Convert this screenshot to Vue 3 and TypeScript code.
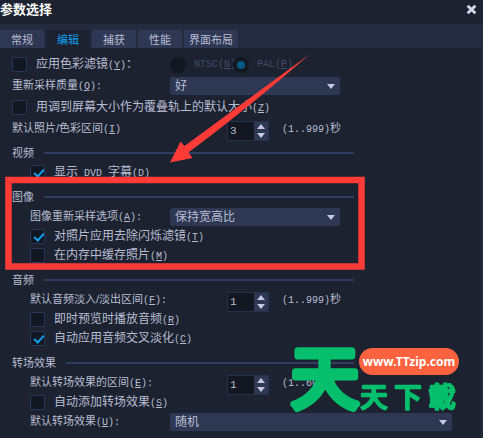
<script setup lang="ts">
import { reactive, ref } from 'vue'

const tabs = ['常规', '编辑', '捕获', '性能', '界面布局']
const activeTab = ref('编辑')

const form = reactive({
  colorFilter: false,
  standard: 'PAL',
  quality: '好',
  fitScreen: false,
  photoLength: 3,
  dvdSubtitle: true,
  resample: '保持宽高比',
  antiFlicker: true,
  cachePhotos: false,
  fadeLength: 1,
  previewAudio: false,
  crossFade: true,
  transitionLength: 1,
  autoTransition: false,
  transition: '随机',
})

type NumberField = 'photoLength' | 'fadeLength' | 'transitionLength'

function step(field: NumberField, delta: number, max: number) {
  form[field] = Math.min(max, Math.max(1, Number(form[field]) + delta))
}
</script>

<template>
  <main class="dialog">
    <header class="titlebar">
      <h1>参数选择</h1>
      <button class="close" type="button" aria-label="关闭">
        <svg viewBox="0 0 10 10"><path d="M1.5 1.5 8.5 8.5M8.5 1.5 1.5 8.5" /></svg>
      </button>
    </header>

    <nav class="tabs">
      <button
        v-for="tab in tabs"
        :key="tab"
        type="button"
        :class="{ active: tab === activeTab }"
        @click="activeTab = tab"
      >{{ tab }}</button>
    </nav>

    <form class="panel" @submit.prevent>
      <section class="group general">
        <div class="row">
          <label class="check lead"><input v-model="form.colorFilter" type="checkbox" /><span>应用色彩滤镜<i>(<u>Y</u>)</i>：</span></label>
          <label class="radio"><input v-model="form.standard" type="radio" value="NTSC" disabled /><i>NTSC(<u>N</u>)</i></label>
          <label class="radio"><input v-model="form.standard" type="radio" value="PAL" disabled /><i>PAL(<u>P</u>)</i></label>
        </div>
        <div class="row field">
          <label class="lead" for="quality">重新采样质量<i>(<u>Q</u>):</i></label>
          <span class="combo">
            <select id="quality" v-model="form.quality"><option>好</option></select>
            <svg viewBox="0 0 8 5"><path d="M0 0H8L4 5Z" /></svg>
          </span>
        </div>
        <div class="row">
          <label class="check"><input v-model="form.fitScreen" type="checkbox" /><span>用调到屏幕大小作为覆叠轨上的默认大小<i>(<u>Z</u>)</i></span></label>
        </div>
        <div class="row field">
          <label class="lead" for="photo">默认照片/色彩区间<i>(<u>I</u>)</i></label>
          <span class="spinner">
            <input id="photo" v-model="form.photoLength" type="text" />
            <button type="button" aria-label="增加" @click="step('photoLength', 1, 999)"><svg viewBox="0 0 8 5"><path d="M0 5H8L4 0Z" /></svg></button>
            <button type="button" aria-label="减少" @click="step('photoLength', -1, 999)"><svg viewBox="0 0 8 5"><path d="M0 0H8L4 5Z" /></svg></button>
          </span>
          <span class="range"><i>(1..999)</i>秒</span>
        </div>
      </section>

      <section class="group">
        <h2>视频</h2>
        <div class="row">
          <label class="check"><input v-model="form.dvdSubtitle" type="checkbox" /><span>显示<i> DVD </i>字幕<i>(<u>D</u>)</i></span></label>
        </div>
      </section>

      <section class="group">
        <h2>图像</h2>
        <div class="row field">
          <label class="lead" for="resample">图像重新采样选项<i>(<u>A</u>):</i></label>
          <span class="combo">
            <select id="resample" v-model="form.resample"><option>保持宽高比</option></select>
            <svg viewBox="0 0 8 5"><path d="M0 0H8L4 5Z" /></svg>
          </span>
        </div>
        <div class="row">
          <label class="check"><input v-model="form.antiFlicker" type="checkbox" /><span>对照片应用去除闪烁滤镜<i>(<u>T</u>)</i></span></label>
        </div>
        <div class="row">
          <label class="check"><input v-model="form.cachePhotos" type="checkbox" /><span>在内存中缓存照片<i>(<u>M</u>)</i></span></label>
        </div>
      </section>

      <section class="group">
        <h2>音频</h2>
        <div class="row field">
          <label class="lead" for="fade">默认音频淡入/淡出区间<i>(<u>F</u>):</i></label>
          <span class="spinner">
            <input id="fade" v-model="form.fadeLength" type="text" />
            <button type="button" aria-label="增加" @click="step('fadeLength', 1, 999)"><svg viewBox="0 0 8 5"><path d="M0 5H8L4 0Z" /></svg></button>
            <button type="button" aria-label="减少" @click="step('fadeLength', -1, 999)"><svg viewBox="0 0 8 5"><path d="M0 0H8L4 5Z" /></svg></button>
          </span>
          <span class="range"><i>(1..999)</i>秒</span>
        </div>
        <div class="row">
          <label class="check"><input v-model="form.previewAudio" type="checkbox" /><span>即时预览时播放音频<i>(<u>R</u>)</i></span></label>
        </div>
        <div class="row">
          <label class="check"><input v-model="form.crossFade" type="checkbox" /><span>自动应用音频交叉淡化<i>(<u>C</u>)</i></span></label>
        </div>
      </section>

      <section class="group">
        <h2>转场效果</h2>
        <div class="row field">
          <label class="lead" for="length">默认转场效果的区间<i>(<u>E</u>):</i></label>
          <span class="spinner">
            <input id="length" v-model="form.transitionLength" type="text" />
            <button type="button" aria-label="增加" @click="step('transitionLength', 1, 60)"><svg viewBox="0 0 8 5"><path d="M0 5H8L4 0Z" /></svg></button>
            <button type="button" aria-label="减少" @click="step('transitionLength', -1, 60)"><svg viewBox="0 0 8 5"><path d="M0 0H8L4 5Z" /></svg></button>
          </span>
          <span class="range"><i>(1..60)</i>秒</span>
        </div>
        <div class="row">
          <label class="check"><input v-model="form.autoTransition" type="checkbox" /><span>自动添加转场效果<i>(<u>S</u>)</i></span></label>
        </div>
        <div class="row field">
          <label class="lead" for="transition">默认转场效果<i>(<u>U</u>):</i></label>
          <span class="combo wide">
            <select id="transition" v-model="form.transition"><option>随机</option></select>
            <svg viewBox="0 0 8 5"><path d="M0 0H8L4 5Z" /></svg>
          </span>
        </div>
      </section>
    </form>

    <!-- Annotation: highlighted section and pointer -->
    <svg class="overlay" width="483" height="438" viewBox="0 0 483 438">
      <rect x="8.5" y="180" width="353" height="86.5" fill="none" stroke="#ff3b38" stroke-width="6.5" />
      <path d="M170 162.500 180.500 141.500 184.500 146 Q247 100 310 54 Q252 105 188.500 152.500L192.500 158Z" fill="#ff3b38" />
    </svg>

    <!-- Site badge -->
    <svg class="overlay" width="483" height="438" viewBox="0 0 483 438">
      <g class="brand">
        <text class="big" x="325" y="403">天</text>
        <text x="374" y="407">天</text>
        <text x="408" y="407">下</text>
        <text x="442" y="407">載</text>
      </g>
      <rect x="359" y="348" width="100" height="27" rx="13.500" fill="#ff623e" />
      <text class="url" x="409" y="366">www.TTzip.com</text>
    </svg>
  </main>
</template>

<style>
body {
  margin: 0;
  background: #1c2230;
}
</style>

<style scoped>
* {
  box-sizing: border-box;
}

.dialog {
  position: relative;
  min-height: 100vh;
  overflow: hidden;
  background: #1c2230;
  color: #b9bdd3;
  font: 11px/18px "Liberation Sans", "Noto Sans CJK SC", sans-serif;
}

button,
input,
select {
  margin: 0;
  padding: 0;
  border: 0;
  color: inherit;
  font: inherit;
}

i {
  font: 10px/18px "Liberation Mono", monospace;
  white-space: pre;
}

.titlebar {
  display: flex;
  align-items: center;
  justify-content: space-between;
  height: 24px;
  padding-right: 6px;
}

h1 {
  margin: 0 0 5px;
  color: #fff;
  font-size: 13px;
  font-weight: 700;
  line-height: 19px;
}

.close {
  display: flex;
  width: 11px;
  height: 11px;
  margin-bottom: 5px;
  background: none;
}

.close svg {
  width: 100%;
  fill: none;
  stroke: #d5d9ea;
  stroke-width: 2.6;
}

.tabs {
  display: flex;
  gap: 1px;
  height: 24px;
  padding-top: 6px;
  background: #242b3f;
}

.tabs button {
  height: 18px;
  padding: 1px 11px 0;
  border-right: 1px solid #242b3f;
  background: #2e3753;
}

.tabs button:last-child {
  padding: 1px 5px 0;
}

.tabs button.active {
  background: #1c2230;
  color: #10a0f0;
}

.panel {
  padding: 7px 31px 6px 12px;
  box-shadow: inset -2px 0 #242b3f;
}

.group {
  margin-bottom: 5px;
}

.group:last-child {
  margin-bottom: 0;
}

.general {
  display: grid;
  gap: 2px;
  margin-bottom: 4px;
}

.row {
  display: flex;
  align-items: center;
  height: 19px;
  padding-left: 18px;
  white-space: nowrap;
}

.row.field {
  height: 20px;
}

.general .row {
  padding-left: 0;
}

.lead {
  flex: 0 0 140px;
}

.general .lead {
  flex-basis: 158px;
}

h2 {
  display: flex;
  align-items: center;
  gap: 10px;
  height: 20px;
  margin: 0 98px 0 0;
  font-size: 11px;
  font-weight: 400;
}

h2::after {
  flex: 1;
  height: 2px;
  background: #303c60;
  content: "";
}

.check {
  display: flex;
  align-items: center;
  gap: 9px;
  font-size: 12px;
}

.check input {
  width: 15px;
  height: 15px;
  border: 1px solid #27365c;
  border-radius: 1px;
  background: #131722;
  appearance: none;
}

.check input:checked::before {
  display: block;
  width: 4px;
  height: 8px;
  margin: 1px 0 0 5px;
  border: solid #10a0f0;
  border-width: 0 2px 2px 0;
  transform: rotate(42deg);
  content: "";
}

.radio {
  display: flex;
  align-items: center;
  gap: 8px;
  width: 63px;
  color: #424b69;
}

.radio input {
  position: relative;
  flex: none;
  width: 16px;
  height: 16px;
  border: 4px solid #131722;
  border-radius: 50%;
  background: #131722;
  appearance: none;
}

.radio input:checked {
  background: #075985;
}

.combo {
  display: grid;
  align-items: center;
  width: 170px;
}

.combo.wide {
  flex: 1;
}

.combo select,
.combo svg {
  grid-area: 1 / 1;
}

.combo select {
  width: 100%;
  height: 18px;
  padding: 0 5px;
  border-radius: 2px;
  background: #2e3753;
  font-size: 12px;
  appearance: none;
}

.combo svg {
  justify-self: end;
  width: 8px;
  margin-right: 5px;
  pointer-events: none;
}

.combo path,
.spinner path {
  fill: #c5cae0;
}

.spinner {
  display: grid;
  grid-template: 1fr 1fr / 1fr 14px;
  width: 42px;
  height: 20px;
  margin: 3px 13px 0 57px;
  border: 1px solid #27304a;
}

.spinner input {
  grid-row: 1 / 3;
  width: 100%;
  min-width: 0;
  padding-left: 2px;
  background: #131722;
  font-family: "Liberation Mono", monospace;
}

.spinner button {
  display: grid;
  grid-column: 2;
  place-items: center;
  background: #2e3753;
}

.spinner svg {
  width: 8px;
  height: 5px;
}

.overlay {
  position: absolute;
  top: 0;
  left: 0;
  pointer-events: none;
}

.brand {
  fill: #06bf6d;
  stroke: #06bf6d;
  stroke-width: 2.5;
  stroke-linejoin: round;
  font: 400 27px "Noto Sans CJK TC", sans-serif;
  text-anchor: middle;
}

.brand .big {
  font-size: 68px;
  stroke-width: 7;
}

.url {
  fill: #fff;
  font: 700 12px "Noto Sans", sans-serif;
  text-anchor: middle;
}
</style>
